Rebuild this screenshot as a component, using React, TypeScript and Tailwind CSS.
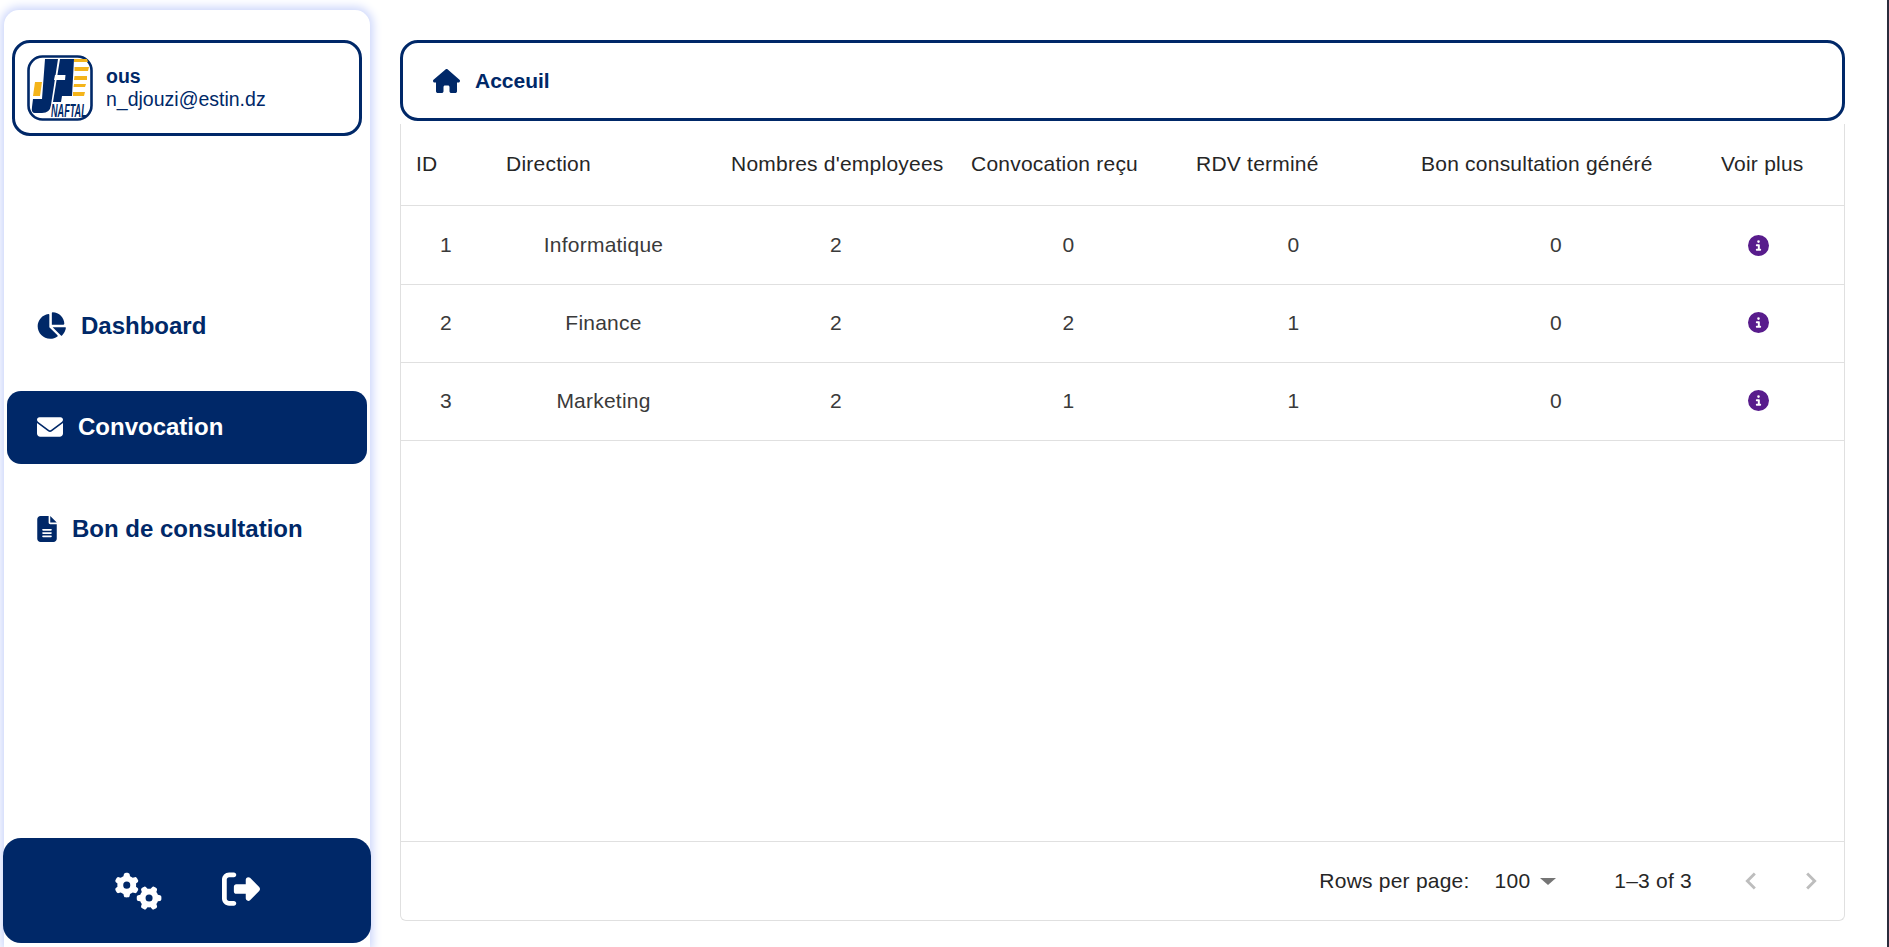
import { FaChartPie, FaCircleInfo, FaEnvelope, FaFileLines, FaGears, FaHouse, FaRightFromBracket } from "react-icons/fa6";
import { MdChevronLeft, MdChevronRight } from "react-icons/md";

const rows = [
  { id: 1, direction: "Informatique", employees: 2, convocations: 0, rdv: 0, bons: 0 },
  { id: 2, direction: "Finance", employees: 2, convocations: 2, rdv: 1, bons: 0 },
  { id: 3, direction: "Marketing", employees: 2, convocations: 1, rdv: 1, bons: 0 },
];

const headers = ["ID", "Direction", "Nombres d'employees", "Convocation reçu", "RDV terminé", "Bon consultation généré", "Voir plus"];

const columns = "grid grid-cols-[90px_225px_240px_225px_225px_300px_105px]";

const menu = [
  { label: "Dashboard", icon: FaChartPie, size: "-ml-px h-[29px] w-[30px]", active: false },
  { label: "Convocation", icon: FaEnvelope, size: "h-[26px] w-[26px]", active: true },
  { label: "Bon de consultation", icon: FaFileLines, size: "h-[26px] w-[20px]", active: false },
];

function Logo() {
  return (
    <svg width="66" height="66" viewBox="0 0 66 66" className="shrink-0">
      <rect x="1.5" y="1.5" width="63" height="63" rx="14" fill="#fff" stroke="#002868" strokeWidth="2.6" />
      {/* J */}
      <path d="M18 4H31L24 50Q23 58 15 58H8Q4 58 5 52L6 44H15Z" fill="#002868" />
      {/* P */}
      <path d="M33 4H47L45 41H35L34 47H26Z" fill="#002868" />
      <path d="M28 20H38.5L38 25H27Z" fill="#fff" />
      {/* yellow */}
      <path d="M8 27H15L13 41H6Z" fill="#f4b41a" />
      <path d="M47 4H60L61 7H47Z M47.5 12H62L61 16H47.5Z M47.5 21H60L60 25H47Z M47 29H59L58 32H46.5Z M46 37H58L57 41H46Z" fill="#f4b41a" />
      <text transform="translate(24 62) scale(0.48 1)" fontFamily="'Liberation Sans', sans-serif" fontWeight="700" fontStyle="italic" fontSize="19" fill="#002868">
        NAFTAL
      </text>
    </svg>
  );
}

export default function App() {
  return (
    <div className="flex h-screen w-full overflow-hidden bg-white font-['Liberation_Sans',Arial,sans-serif]">
      {/* Sidebar */}
      <aside className="ml-[4px] mt-[10px] flex w-[366px] shrink-0 flex-col rounded-t-[15px] bg-white shadow-[0_0_10px_3px_#ccd6fb]">
        <div className="mx-[8px] mt-[30px] flex h-[96px] items-center gap-[13px] rounded-[18px] border-[3px] border-[#002868] pl-[12px] text-[#002868]">
          <Logo />
          <div className="text-[19.5px] leading-[23px]">
            <div className="font-bold">ous</div>
            <div>n_djouzi@estin.dz</div>
          </div>
        </div>

        <nav className="mt-[153px] flex flex-col gap-[29px] px-[3px]">
          {menu.map((item, i) => (
            <div
              key={item.label}
              className={`flex h-[73px] items-center gap-[15px] rounded-[14px] pl-[30px] text-[24px] font-bold ${
                item.active ? "bg-[#002868] text-white" : "text-[#002868]"
              } ${i > 0 ? "pb-[2px]" : ""}`}
            >
              <item.icon className={item.size} />
              <span>{item.label}</span>
            </div>
          ))}
        </nav>

        <div className="-mx-px mb-[4px] mt-auto flex h-[105px] items-center justify-center gap-[60px] rounded-[18px] bg-[#002868] text-white">
          <FaGears className="h-[38px] w-[47px]" />
          <FaRightFromBracket className="mb-[3px] h-[38px] w-[38px]" />
        </div>
      </aside>

      {/* Main */}
      <main className="ml-[30px] mt-[40px] flex w-[1445px] shrink-0 flex-col">
        <div className="flex h-[81px] shrink-0 items-center gap-[15px] rounded-[18px] border-[3px] border-[#002868] pl-[30px] text-[21px] font-bold text-[#002868]">
          <FaHouse className="h-[24px] w-[27px]" />
          <span>Acceuil</span>
        </div>

        <div className="mt-[3px] flex h-[797px] flex-col rounded-b-[6px] border border-t-0 border-[#e0e0e0] text-[21px] tracking-[0.225px]">
          <div className={`${columns} h-[82px] shrink-0 items-center border-b border-[#e0e0e0] pb-[2px] text-[#262626]`}>
            {headers.map((h) => (
              <div key={h} className="whitespace-nowrap pl-[15px]">
                {h}
              </div>
            ))}
          </div>

          {rows.map((row, i) => (
            <div
              key={row.id}
              className={`${columns} ${i === 0 ? "h-[79px]" : "h-[78px] pb-[2px]"} shrink-0 items-center border-b border-[#e0e0e0] text-center text-[#3a3a3a]`}
            >
              <div>{row.id}</div>
              <div>{row.direction}</div>
              <div>{row.employees}</div>
              <div>{row.convocations}</div>
              <div>{row.rdv}</div>
              <div>{row.bons}</div>
              <div className="flex justify-center">
                <FaCircleInfo className="h-[21px] w-[21px] text-[#581c8c]" />
              </div>
            </div>
          ))}

          <div className="mt-auto flex h-[79px] shrink-0 items-center justify-end border-t border-[#e0e0e0] pr-[16px] text-[#262626]">
            <span>Rows per page:</span>
            <span className="ml-[25px]">100</span>
            <span className="ml-[10px] h-0 w-0 border-x-[8px] border-t-[7px] border-x-transparent border-t-[#757575]" />
            <span className="ml-[58px]">1–3 of 3</span>
            <MdChevronLeft className="ml-[42px] h-[34px] w-[34px] text-[#bdbdbd]" />
            <MdChevronRight className="ml-[26px] h-[34px] w-[34px] text-[#bdbdbd]" />
          </div>
        </div>
      </main>

      <div className="ml-auto w-[2px] shrink-0 bg-[#2b2d3c]" />
    </div>
  );
}
